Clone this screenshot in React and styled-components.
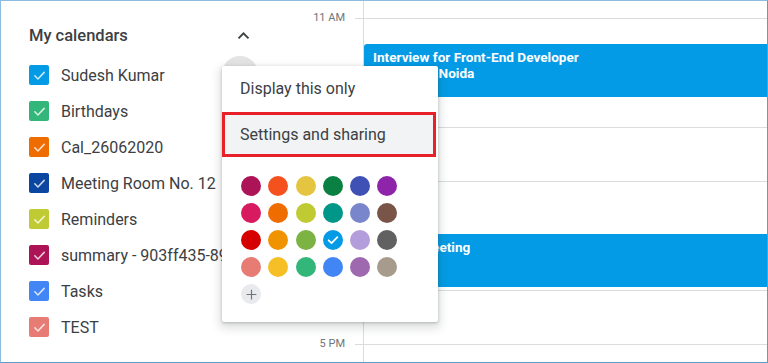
import React from 'react';
import styled, { createGlobalStyle } from 'styled-components';

const GlobalStyle = createGlobalStyle`
  * { box-sizing: border-box; }
  body {
    margin: 0;
    background: #fff;
    font-family: Roboto, "Liberation Sans", Arial, sans-serif;
  }
`;

const SLOT = 54.33;

const Frame = styled.div`
  position: relative;
  width: 768px;
  height: 363px;
  overflow: hidden;
  display: flex;
  background: #fff;
  border: 1px solid #8cbde0;
  border-right-color: #5f9bc8;
  border-bottom-color: #5f9bc8;
`;

const Sidebar = styled.aside`
  width: 289px;
  flex-shrink: 0;
  padding: 16px 0 0 28px;
`;

const SectionHeader = styled.div`
  width: 222px;
  height: 36px;
  margin-bottom: 4px;
  display: flex;
  align-items: center;
  justify-content: space-between;
  color: #3c4043;
  font-size: 16.5px;
  font-weight: 500;
`;

const CalendarRow = styled.div`
  height: 36px;
  display: flex;
  align-items: center;
  gap: 12px;
  color: #3c4043;
  font-size: 16px;
  white-space: nowrap;
`;

const Check = styled.span`
  width: 20px;
  height: 20px;
  border-radius: 2px;
  background: ${p => p.$color};
  display: flex;
  align-items: center;
  justify-content: center;
  flex-shrink: 0;
`;

const Gutter = styled.div`
  width: 73px;
  flex-shrink: 0;
  padding-top: 17px;
`;

const HourSlot = styled.div`
  height: ${SLOT}px;
  display: flex;
`;

const HourLabel = styled.span`
  flex: 1;
  margin-top: -7px;
  line-height: 14px;
  height: 14px;
  padding-right: 10px;
  text-align: right;
  color: #70757a;
  font-size: 11px;
`;

const Tick = styled.span`
  width: 8px;
  border-top: 1px solid #dadce0;
`;

const DayColumn = styled.div`
  position: relative;
  flex: 1;
  border-left: 1px solid #dadce0;
  padding-top: 17px;
`;

const GridRow = styled.div`
  height: ${SLOT}px;
  border-top: 1px solid #dadce0;
`;

const Event = styled.div`
  position: absolute;
  left: 0;
  right: 0;
  padding: 5px 9px;
  background: #039be5;
  color: #fff;
  font-size: 13.6px;
  font-weight: 700;
  line-height: 16px;
  border-radius: 3px 0 0 3px;
`;

const HoverCircle = styled.div`
  position: absolute;
  left: 221px;
  top: 55px;
  width: 36px;
  height: 36px;
  border-radius: 50%;
  background: #e4e4e4;
`;

const Menu = styled.div`
  position: absolute;
  left: 221px;
  top: 65px;
  width: 216px;
  height: 256px;
  padding-top: 2px;
  background: #fff;
  border-radius: 2px;
  box-shadow: 0 4px 8px 3px rgba(60, 64, 67, 0.15), 0 1px 3px rgba(60, 64, 67, 0.3);
  z-index: 2;
`;

const MenuItem = styled.div`
  height: ${p => (p.$outlined ? 45 : 40)}px;
  margin: ${p => (p.$outlined ? '4px 2px 0 0' : '0')};
  display: flex;
  align-items: center;
  padding-left: ${p => (p.$outlined ? 15 : 18)}px;
  color: #3c4043;
  font-size: 16px;
  background: ${p => (p.$active ? '#f1f3f4' : 'transparent')};
  border: ${p => (p.$outlined ? '3px solid #e8202a' : 'none')};
`;

const Palette = styled.div`
  display: grid;
  grid-template-columns: repeat(6, 20px);
  column-gap: 7.3px;
  row-gap: 7px;
  padding: 19px 0 0 19px;
`;

const Swatch = styled.span`
  width: 20px;
  height: 20px;
  border-radius: 50%;
  background: ${p => p.$color};
  display: flex;
  align-items: center;
  justify-content: center;
`;

const AddSwatch = styled(Swatch)`
  background: #e8eaed;
`;

const CheckMark = ({ size = 14, opacity = 1, weight = 3 }) => (
  <svg width={size} height={size} viewBox="0 0 24 24" fill="none">
    <path d="M4.5 12.5l5 5L19.5 7" stroke="#fff" strokeOpacity={opacity} strokeWidth={weight} strokeLinecap="round" strokeLinejoin="round" />
  </svg>
);

const ChevronUp = () => (
  <svg width="15" height="15" viewBox="0 0 24 24" fill="none">
    <path d="M4 16.5l8-8 8 8" stroke="#3c4043" strokeWidth="3" />
  </svg>
);

const Plus = () => (
  <svg width="13" height="13" viewBox="0 0 24 24" fill="none">
    <path d="M12 3v18M3 12h18" stroke="#70757a" strokeWidth="2.2" />
  </svg>
);

const calendars = [
  { name: 'Sudesh Kumar', color: '#039be5' },
  { name: 'Birthdays', color: '#33b679' },
  { name: 'Cal_26062020', color: '#ef6c00' },
  { name: 'Meeting Room No. 12', color: '#0b47a1' },
  { name: 'Reminders', color: '#c0ca33' },
  { name: 'summary - 903ff435-89c2-4f', color: '#ad1457' },
  { name: 'Tasks', color: '#4285f4' },
  { name: 'TEST', color: '#e67c73' },
];

const hours = ['11 AM', '12 PM', '1 PM', '2 PM', '3 PM', '4 PM', '5 PM'];

const palette = [
  '#ad1457', '#f4511e', '#e4c441', '#0b8043', '#3f51b5', '#8e24aa',
  '#d81b60', '#ef6c00', '#c0ca33', '#009688', '#7986cb', '#795548',
  '#d50000', '#f09300', '#7cb342', '#039be5', '#b39ddb', '#616161',
  '#e67c73', '#f6bf26', '#33b679', '#4285f4', '#9e69af', '#a79b8e',
];

export default function App() {
  return (
    <>
      <GlobalStyle />
      <Frame>
        <Sidebar>
          <SectionHeader>
            My calendars
            <ChevronUp />
          </SectionHeader>
          {calendars.map(c => (
            <CalendarRow key={c.name}>
              <Check $color={c.color}><CheckMark size={15} opacity={0.8} weight={2.4} /></Check>
              {c.name}
            </CalendarRow>
          ))}
        </Sidebar>

        <Gutter>
          {hours.map(h => (
            <HourSlot key={h}>
              <HourLabel>{h}</HourLabel>
              <Tick />
            </HourSlot>
          ))}
        </Gutter>

        <DayColumn>
          {hours.map(h => <GridRow key={h} />)}
          <Event style={{ top: 43, height: 53 }}>
            <div>Interview for Front-End Developer</div>
            <div>Sector 62, Noida</div>
          </Event>
          <Event style={{ top: 233, height: 53 }}>
            <div>Project Meeting</div>
          </Event>
        </DayColumn>

        <HoverCircle />
        <Menu>
          <MenuItem>Display this only</MenuItem>
          <MenuItem $active $outlined>Settings and sharing</MenuItem>
          <Palette>
            {palette.map(color => (
              <Swatch key={color} $color={color}>
                {color === '#039be5' && <CheckMark size={14} />}
              </Swatch>
            ))}
            <AddSwatch><Plus /></AddSwatch>
          </Palette>
        </Menu>
      </Frame>
    </>
  );
}
